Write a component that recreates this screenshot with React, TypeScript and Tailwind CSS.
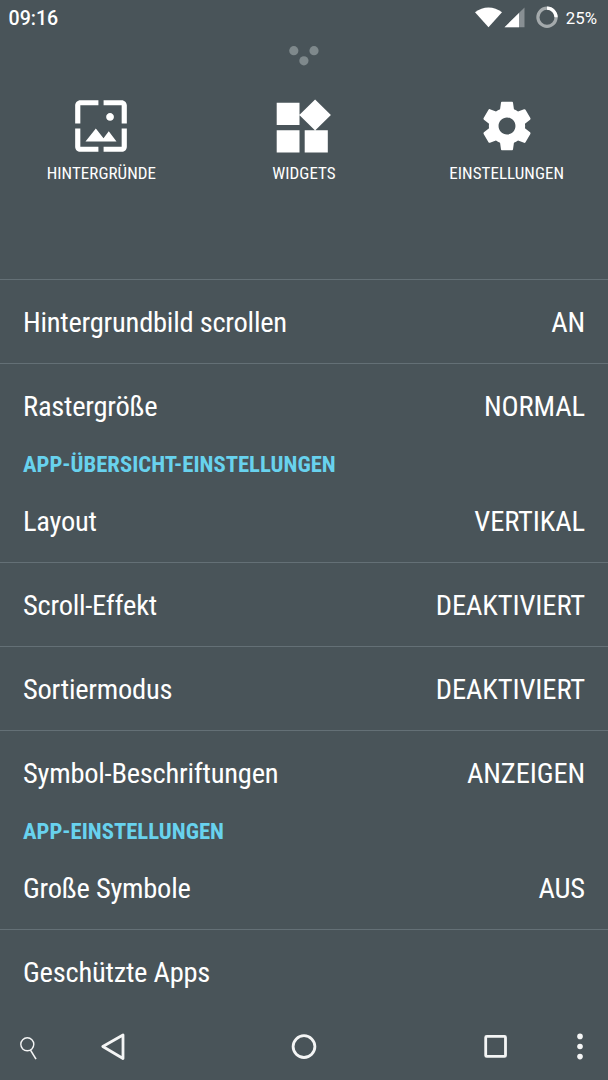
import type { ReactNode } from 'react'

type Setting = {
  label: string
  value?: string
}

const wallpaperSettings: Setting[] = [
  { label: 'Hintergrundbild scrollen', value: 'AN' },
  { label: 'Rastergröße', value: 'NORMAL' },
]

const drawerSettings: Setting[] = [
  { label: 'Layout', value: 'VERTIKAL' },
  { label: 'Scroll-Effekt', value: 'DEAKTIVIERT' },
  { label: 'Sortiermodus', value: 'DEAKTIVIERT' },
  { label: 'Symbol-Beschriftungen', value: 'ANZEIGEN' },
]

const appSettings: Setting[] = [
  { label: 'Große Symbole', value: 'AUS' },
  { label: 'Geschützte Apps' },
]

function StatusBar() {
  return (
    <header className="flex h-9 items-center justify-between pl-[8.5px] pr-[11px] font-['Roboto'] [font-stretch:100%]">
      <span className="pt-[2px] text-[19.6px] font-medium">09:16</span>
      <div className="flex items-center">
        <svg width="86" height="36" viewBox="0 0 86 36">
          <path d="M1 12.2C9 5.9 20 5.9 28 12.2L14.5 27.3Z" fill="#fff" />
          <path d="M50.5 7.5V27.3H30.5Z" fill="#fff" opacity=".35" />
          <path d="M45 13V27.3H30.5Z" fill="#fff" />
          <circle cx="73" cy="17.3" r="9.1" fill="none" stroke="#fff" strokeOpacity=".5" strokeWidth="3.2" />
          <path d="M73 8.2A9.1 9.1 0 0 1 82.1 17.3" fill="none" stroke="#fff" strokeWidth="3.2" />
        </svg>
        <span className="ml-[6px] pt-[2px] text-[16.8px]">25%</span>
      </div>
    </header>
  )
}

function Action({ label, children }: { label: string; children: ReactNode }) {
  return (
    <button className="flex flex-1 flex-col items-center">
      <span className="flex h-[62px] items-center">{children}</span>
      <span className="mt-[6px] text-[17px] leading-5 tracking-[0.05px]">{label}</span>
    </button>
  )
}

function Row({ label, value }: Setting) {
  return (
    <li className="box-content flex h-[83px] items-center justify-between border-t border-[#647076] px-[23px] text-[28.5px] first:border-t-0">
      <span className="pt-[3px] tracking-[-0.24px]">{label}</span>
      {value && <span className="pt-[3px] tracking-[-0.12px]">{value}</span>}
    </li>
  )
}

function Section({ title, items }: { title?: string; items: Setting[] }) {
  return (
    <section>
      {title && (
        <h2 className="h-8 px-[23px] text-[22.7px] font-bold leading-[36px] text-[#68d2ee]">{title}</h2>
      )}
      <ul>
        {items.map((item) => (
          <Row key={item.label} {...item} />
        ))}
      </ul>
    </section>
  )
}

function NavBar() {
  return (
    <nav className="h-[66px]">
      <svg width="608" height="66" viewBox="0 0 608 66" fill="none" stroke="#f4f5f5">
        <circle cx="27.3" cy="30.3" r="6.5" strokeWidth="1.4" />
        <path d="M30.5 36.2L36 45.2" strokeWidth="1.6" />
        <path d="M102.8 32.5L123 21V44.5Z" strokeWidth="2.8" strokeLinejoin="round" />
        <circle cx="304" cy="32.6" r="10.9" strokeWidth="2.8" />
        <rect x="485.7" y="22.4" width="19.8" height="20" rx="1" strokeWidth="2.8" />
        <g fill="#f4f5f5" stroke="none">
          <circle cx="580" cy="22.4" r="2.8" />
          <circle cx="580" cy="32.5" r="2.8" />
          <circle cx="580" cy="42.6" r="2.8" />
        </g>
      </svg>
    </nav>
  )
}

export default function App() {
  return (
    <div className="flex h-[1080px] w-[608px] flex-col overflow-hidden bg-[#495459] font-['Roboto_Condensed','Roboto',sans-serif] text-white [font-stretch:75%]">
      <StatusBar />

      <div className="flex h-[59px] justify-center pt-[9px]">
        <svg width="32" height="22" viewBox="0 0 32 22" className="text-[#7f898c]" fill="currentColor">
          <circle cx="5.8" cy="5.7" r="4.6" />
          <circle cx="26" cy="5.7" r="4.6" />
          <circle cx="15.9" cy="15.8" r="4.6" />
        </svg>
      </div>

      <div className="flex h-[184px] items-start">
        <Action label="HINTERGRÜNDE">
          <svg width="62" height="62" viewBox="0 0 24 24" fill="currentColor">
            <path d="M4 4h7V2H4c-1.1 0-2 .9-2 2v7h2V4zm6 9l-4 5h12l-3-4-2.03 2.71L10 13zm7-4.5c0-.83-.67-1.5-1.5-1.5S14 7.67 14 8.5s.67 1.5 1.5 1.5S17 9.33 17 8.5zM20 2h-7v2h7v7h2V4c0-1.1-.9-2-2-2zm0 18h-7v2h7c1.1 0 2-.9 2-2v-7h-2v7zM4 13H2v7c0 1.1.9 2 2 2h7v-2H4v-7z" />
          </svg>
        </Action>
        <Action label="WIDGETS">
          <svg width="56" height="54" viewBox="0 0 56 54" fill="currentColor">
            <path d="M.7 3.8H23.5V26H.7ZM.7 31.2H23.5V53.5H.7ZM28.7 31.2H51.8V53.5H28.7ZM39.1.4L54.9 16L39.1 31.6L23.3 16Z" />
          </svg>
        </Action>
        <Action label="EINSTELLUNGEN">
          <svg width="58" height="58" viewBox="0 0 24 24" fill="currentColor">
            <path d="M19.43 12.98c.04-.32.07-.64.07-.98s-.03-.66-.07-.98l2.11-1.65c.19-.15.24-.42.12-.64l-2-3.46c-.12-.22-.39-.3-.61-.22l-2.49 1c-.52-.4-1.08-.73-1.69-.98l-.38-2.65C14.46 2.18 14.25 2 14 2h-4c-.25 0-.46.18-.49.42l-.38 2.65c-.61.25-1.17.59-1.69.98l-2.49-1c-.23-.09-.49 0-.61.22l-2 3.46c-.13.22-.07.49.12.64l2.11 1.65c-.04.32-.07.65-.07.98s.03.66.07.98l-2.11 1.65c-.19.15-.24.42-.12.64l2 3.46c.12.22.39.3.61.22l2.49-1c.52.4 1.08.73 1.69.98l.38 2.65c.03.24.24.42.49.42h4c.25 0 .46-.18.49-.42l.38-2.65c.61-.25 1.17-.59 1.69-.98l2.49 1c.23.09.49 0 .61-.22l2-3.46c.12-.22.07-.49-.12-.64l-2.11-1.65zM12 15.5c-1.93 0-3.5-1.57-3.5-3.5s1.57-3.5 3.5-3.5 3.5 1.57 3.5 3.5-1.57 3.5-3.5 3.5z" />
          </svg>
        </Action>
      </div>

      <main className="flex-1 border-t border-[#647076]">
        <Section items={wallpaperSettings} />
        <Section title="APP-ÜBERSICHT-EINSTELLUNGEN" items={drawerSettings} />
        <Section title="APP-EINSTELLUNGEN" items={appSettings} />
      </main>

      <NavBar />
    </div>
  )
}
